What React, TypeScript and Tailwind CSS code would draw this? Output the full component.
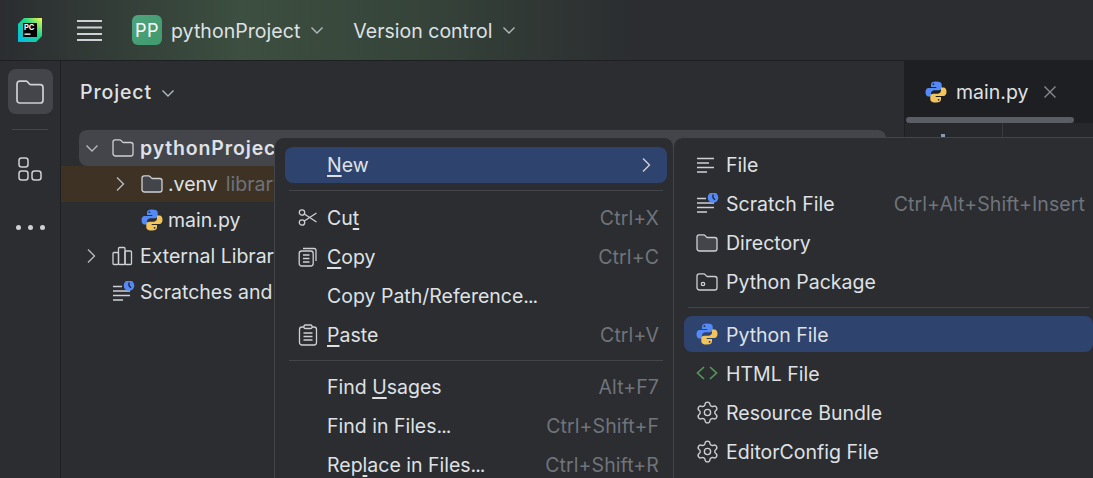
import React from "react";
import { Settings } from "lucide-react";

const font = { fontFamily: "Inter, 'Noto Sans', sans-serif" };

const Py = ({ size = 22 }: { size?: number }) => (
  <svg width={size} height={size} viewBox="0 0 22 22">
    <path d="M10.800 0.500C7.600 0.500 6 1.600 6 3.800V6h5.300v1H3.600C1.600 7 0.500 8.700 0.500 11.200c0 2.600 1.100 4.300 3 4.300H6v-2.700c0-2.100 1.500-3.500 3.600-3.500h4.200c1.700 0 2.900-1.300 2.900-3V3.600c0-2-1.900-3.100-5.900-3.100z" fill="#548af7" />
    <circle cx="8.400" cy="3.200" r="0.900" fill="#2b2d30" />
    <path d="M11.200 21.500c3.200 0 4.800-1.100 4.800-3.300V16h-5.300v-1h7.700c2 0 3.100-1.700 3.100-4.200 0-2.600-1.100-4.300-3-4.300H16v2.700c0 2.100-1.500 3.500-3.600 3.500H8.200c-1.700 0-2.900 1.300-2.900 3v2.700c0 2 1.900 3.100 5.900 3.100z" fill="#f2c55c" />
    <circle cx="13.600" cy="18.800" r="0.900" fill="#2b2d30" />
  </svg>
);

const Chevron = ({ dir = "down", color = "#b4b8bf" }: { dir?: "down" | "right"; color?: string }) => (
  <svg width="16" height="16" viewBox="0 0 16 16" fill="none" stroke={color} strokeWidth="1.400">
    {dir === "down" ? <path d="M2.500 5.500l5.500 5.500 5.500-5.500" /> : <path d="M4 1.500l6.500 6.500-6.500 6.500" />}
  </svg>
);

const Folder = ({ fill = "none", dot = false }: { fill?: string; dot?: boolean }) => (
  <svg width="22" height="22" viewBox="0 0 22 22" fill="none" stroke="#ced0d6" strokeWidth="1.300">
    <path d="M1 5c0-1.300.9-2.200 2.200-2.200h4.300c.7 0 1.200.2 1.700.8l1.300 1.500c.3.300.6.400 1 .4h7.300c1.300 0 2.200.9 2.200 2.200v9.100c0 1.300-.9 2.200-2.200 2.200H3.200C1.900 18.800 1 17.900 1 16.600z" fill={fill} />
    {dot && <circle cx="7" cy="13" r="1.700" />}
  </svg>
);

const Lines = () => (
  <svg width="20" height="18" viewBox="0 0 20 18" fill="none" stroke="#ced0d6" strokeWidth="1.500">
    <path d="M1 2.500h17M1 7h12M1 11.500h17M1 16h10" />
  </svg>
);

const Scratch = () => (
  <svg width="24" height="22" viewBox="0 0 24 22" fill="none" stroke="#ced0d6" strokeWidth="1.300">
    <path d="M1 5.500h9M1 10h17M1 14.500h17M1 19h10" />
    <circle cx="17" cy="4.500" r="5.300" fill="#548af7" stroke="none" />
    <path d="M17 1.500v3.200l2 2" stroke="#1e1f22" strokeWidth="1.300" />
  </svg>
);

const Gear = () => <Settings size={25} strokeWidth={1.300} color="#ced0d6" className="-ml-[1px]" />;

const Scissors = () => (
  <svg width="20" height="20" viewBox="0 0 20 20" fill="none" stroke="#ced0d6" strokeWidth="1.300">
    <circle cx="4" cy="4.500" r="2.700" />
    <circle cx="4" cy="14.500" r="2.700" />
    <path d="M6.300 6l12.200 8M6.300 13l12.200-8" />
  </svg>
);

const CopyIcon = () => (
  <svg width="20" height="22" viewBox="0 0 20 22" fill="none" stroke="#ced0d6" strokeWidth="1.300">
    <path d="M5 2.500h11c1.200 0 2 .8 2 2V15" />
    <rect x="1.200" y="5" width="14" height="15" rx="2.500" />
    <path d="M5 9h6.500M5 12.500h6.500M5 16h6.500" />
  </svg>
);

const PasteIcon = () => (
  <svg width="20" height="22" viewBox="0 0 20 22" fill="none" stroke="#ced0d6" strokeWidth="1.300">
    <rect x="1.500" y="3" width="17" height="18" rx="2.500" />
    <rect x="6" y="1" width="8" height="3.500" rx="1.200" fill="#2b2d30" />
    <path d="M5.500 9h9M5.500 12.500h9M5.500 16h9" />
  </svg>
);

const Logo = () => (
  <svg width="24" height="24" viewBox="0 0 24 24">
    <defs>
      <linearGradient id="pc" x1="0" y1="1" x2="1" y2="0">
        <stop offset="0" stopColor="#00b8f1" />
        <stop offset="0.600" stopColor="#21d789" />
        <stop offset="1" stopColor="#fcf84a" />
      </linearGradient>
    </defs>
    <path d="M6 0h18v18l-6 6H0V6z" fill="url(#pc)" />
    <rect x="5" y="5" width="14" height="14" fill="#000" />
    <text x="6" y="11.500" fill="#fff" fontSize="7.500" fontWeight="700" style={font}>PC</text>
    <rect x="6.500" y="15.500" width="6" height="1.300" fill="#fff" />
  </svg>
);

const Dots = ({ text }: { text: string }) =>
  text.endsWith("...") ? (
    <>
      {text.slice(0, -3)}
      <span className="tracking-[-1px]">...</span>
    </>
  ) : (
    <>{text}</>
  );

const Row = ({ icon, label, u, shortcut, active, sub, low }: { icon?: React.ReactNode; label: string; u?: number; shortcut?: string; active?: boolean; sub?: boolean; low?: boolean }) => (
  <div className={`h-[36px] mb-[3px] flex items-center rounded-[8px] text-[19.500px] text-[#dfe1e5] pr-[8px] ${active ? "bg-[#2e436e]" : ""} ${sub ? "pl-[12px]" : "pl-[13px]"}`}>
    <span className={`shrink-0 flex items-center ${sub ? "w-[30px]" : "w-[29px]"}`}>{icon}</span>
    <span className={`whitespace-pre ${low ? "mt-[4px]" : "mt-[2px]"}`}>
      {u === undefined ? <Dots text={label} /> : (
        <>
          {label.slice(0, u)}
          <span className="underline underline-offset-[3px] decoration-[1.500px]">{label[u]}</span>
          <Dots text={label.slice(u + 1)} />
        </>
      )}
    </span>
    {shortcut && <span className="ml-auto mt-[2px] text-[#70747b] tracking-[0.1px]">{shortcut}</span>}
  </div>
);

const Sep = ({ after = "mb-[8px]" }: { after?: string }) => <div className={`h-px bg-[#43454a] mx-[4px] mt-[7px] ${after}`} />;

const TreeRow = ({ pad, iconCol = "w-[27px]", labelW = "w-[134px]", chevron, icon, children, className = "" }: { pad: string; iconCol?: string; labelW?: string; chevron?: "down" | "right"; icon: React.ReactNode; children: React.ReactNode; className?: string }) => (
  <div className={`h-[36px] flex items-center text-[19.500px] text-[#dfe1e5] whitespace-nowrap ${pad} ${className}`}>
    <span className="w-[28px] shrink-0 flex items-center">{chevron && <Chevron dir={chevron} />}</span>
    <span className={`${iconCol} shrink-0 flex items-center`}>{icon}</span>
    <span className={`mt-[2px] overflow-hidden ${labelW}`}>{children}</span>
  </div>
);

export default function App() {
  return (
    <div className="h-[478px] w-[1093px] overflow-hidden relative flex flex-col bg-[#2b2d30]" style={font}>
      {/* title bar */}
      <div className="h-[61px] shrink-0 border-b border-[#1e1f22] flex items-center bg-[linear-gradient(90deg,#2b2d30_0%,#3c4f40_22%,#36443a_38%,#2b2d30_58%)]">
        <div className="ml-[18px] w-[24px]"><Logo /></div>
        <svg className="ml-[35px]" width="25" height="24" viewBox="0 0 25 24" fill="none" stroke="#ced0d6" strokeWidth="2">
          <path d="M0 3h25M0 9.500h25M0 16h25M0 22h25" />
        </svg>
        <div className="ml-[30px] w-[30px] h-[30px] rounded-[6px] bg-[linear-gradient(135deg,#4fa47d,#3f9a6d)] flex items-center justify-center text-[#fff] text-[18px] tracking-[0.5px]">PP</div>
        <span className="ml-[9px] mt-[4px] text-[19.500px] text-[#dfe1e5] tracking-[0.05px]">pythonProject</span>
        <span className="ml-[9px]"><Chevron /></span>
        <span className="ml-[28px] mt-[4px] text-[19.500px] text-[#dfe1e5]">Version control</span>
        <span className="ml-[9px]"><Chevron /></span>
      </div>

      <div className="flex-1 flex min-h-0">
        {/* tool stripe */}
        <div className="w-[61px] shrink-0 border-r border-[#1e1f22] flex flex-col items-center pt-[8px]">
          <div className="w-[45px] h-[45px] rounded-[8px] bg-[#43454a] flex items-center justify-center">
            <svg width="28" height="24" viewBox="0 0 28 24" fill="none" stroke="#ced0d6" strokeWidth="1.700">
              <path d="M1 4c0-1.700 1.100-2.800 2.800-2.800h6c.9 0 1.500.3 2.100 1l1.700 2c.4.400.8.500 1.300.5h9.300c1.700 0 2.800 1.100 2.800 2.800v12.700c0 1.700-1.100 2.800-2.800 2.800H3.800C2.100 23 1 21.900 1 20.200z" />
            </svg>
          </div>
          <div className="w-[36px] h-px bg-[#43454a] mt-[15px]" />
          <svg className="mt-[27px]" width="24" height="24" viewBox="0 0 24 24" fill="none" stroke="#ced0d6" strokeWidth="1.500">
            <rect x="1" y="1" width="9" height="9" rx="2.500" />
            <rect x="1" y="14" width="9" height="9" rx="2.500" />
            <rect x="14" y="14" width="9" height="9" rx="2.500" />
          </svg>
          <div className="mt-[44px] flex gap-[7px]">
            <span className="w-[5px] h-[5px] rounded-full bg-[#ced0d6]" />
            <span className="w-[5px] h-[5px] rounded-full bg-[#ced0d6]" />
            <span className="w-[5px] h-[5px] rounded-full bg-[#ced0d6]" />
          </div>
        </div>

        {/* project panel */}
        <div className="w-[844px] shrink-0 border-r border-[#1e1f22]">
          <div className="h-[62px] flex items-center pl-[19px] text-[19.500px] font-medium text-[#dfe1e5]">
            <span className="mt-[2px] tracking-[0.9px]">Project</span>
            <span className="ml-[8px] mt-[1px]"><Chevron /></span>
          </div>
          <div className="h-[7px]" />
          <TreeRow pad="pl-[5px]" iconCol="w-[28px]" chevron="down" icon={<Folder />} className="bg-[#43454a] rounded-[8px] ml-[18px] mr-[18px] font-semibold tracking-[0.85px]">pythonProject</TreeRow>
          <TreeRow pad="pl-[52px]" labelW="w-[106px]" chevron="right" icon={<Folder fill="#43454a" />} className="bg-[#3d3223]">
            .venv<span className="ml-[8px] text-[#6f737a]">library root</span>
          </TreeRow>
          <TreeRow pad="pl-[52px]" labelW="w-[106px]" icon={<Py />}>main.py</TreeRow>
          <TreeRow pad="pl-[23px]" iconCol="w-[28px]" chevron="right" icon={
            <svg width="21" height="20" viewBox="0 0 21 20" fill="none" stroke="#ced0d6" strokeWidth="1.300">
              <rect x="1" y="6.500" width="5.500" height="12" rx="1" />
              <rect x="6.500" y="1.500" width="6.500" height="17" rx="1" />
              <rect x="13" y="5" width="6.500" height="13.500" rx="1" />
            </svg>
          }>External Libraries</TreeRow>
          <TreeRow pad="pl-[23px]" iconCol="w-[28px]" icon={<Scratch />}>Scratches and Consoles</TreeRow>
        </div>

        {/* editor */}
        <div className="flex-1 bg-[#1e1f22]">
          <div className="h-[56px] flex items-center pl-[20px] pt-[6px]">
            <Py />
            <span className="ml-[9px] mt-[1px] text-[19.500px] text-[#dfe1e5]">main.py</span>
            <svg className="ml-[15px]" width="14" height="14" viewBox="0 0 14 14" fill="none" stroke="#868a91" strokeWidth="1.400">
              <path d="M1.500 1.500l11 11M12.500 1.500l-11 11" />
            </svg>
          </div>
          <div className="h-[6px] w-[168px] ml-[1px] rounded-[3px] bg-[#5a5d63]" />
          <div className="h-[14px] flex bg-[#27282c]">
            <div className="relative w-[98px] border-r border-[#393b40]">
              <span className="absolute left-[36px] bottom-0 w-[4px] h-[3px] bg-[#8d99b0]" />
            </div>
          </div>
        </div>
      </div>

      {/* context menu */}
      <div className="absolute left-[274px] top-[137px] w-[400px] h-[360px] rounded-[10px] bg-[#2b2d30] border border-[#43454a] pl-[10px] pr-[6px] pt-[9px]">
        <div className="relative">
          <Row label="New" u={0} active />
          <span className="absolute right-[12px] top-[10px]"><Chevron dir="right" color="#ced0d6" /></span>
        </div>
        <Sep after="mb-[9px]" />
        <Row icon={<Scissors />} label="Cut" u={2} shortcut="Ctrl+X" />
        <Row icon={<CopyIcon />} label="Copy" u={0} shortcut="Ctrl+C" />
        <Row label="Copy Path/Reference..." />
        <Row icon={<PasteIcon />} label="Paste" u={0} shortcut="Ctrl+V" />
        <Sep />
        <Row label="Find Usages" u={5} shortcut="Alt+F7" />
        <Row label="Find in Files..." shortcut="Ctrl+Shift+F" />
        <Row label="Replace in Files..." u={3} shortcut="Ctrl+Shift+R" />
      </div>

      {/* submenu */}
      <div className="absolute left-[673px] top-[137px] w-[440px] h-[360px] rounded-[10px] bg-[#2b2d30] border border-[#43454a] pl-[10px] pr-[19px] pt-[9px]">
        <Row sub icon={<Lines />} label="File" />
        <Row sub icon={<Scratch />} label="Scratch File" shortcut="Ctrl+Alt+Shift+Insert" />
        <Row sub icon={<Folder fill="#43454a" />} label="Directory" />
        <Row sub icon={<Folder dot />} label="Python Package" />
        <Sep />
        <Row sub low active icon={<Py />} label="Python File" />
        <Row sub low icon={
          <svg width="22" height="16" viewBox="0 0 22 16" fill="none" stroke="#57965c" strokeWidth="1.700">
            <path d="M8 2L1.500 8 8 14M14 2l6.500 6L14 14" />
          </svg>
        } label="HTML File" />
        <Row sub low icon={<Gear />} label="Resource Bundle" />
        <Row sub low icon={<Gear />} label="EditorConfig File" />
      </div>
    </div>
  );
}
